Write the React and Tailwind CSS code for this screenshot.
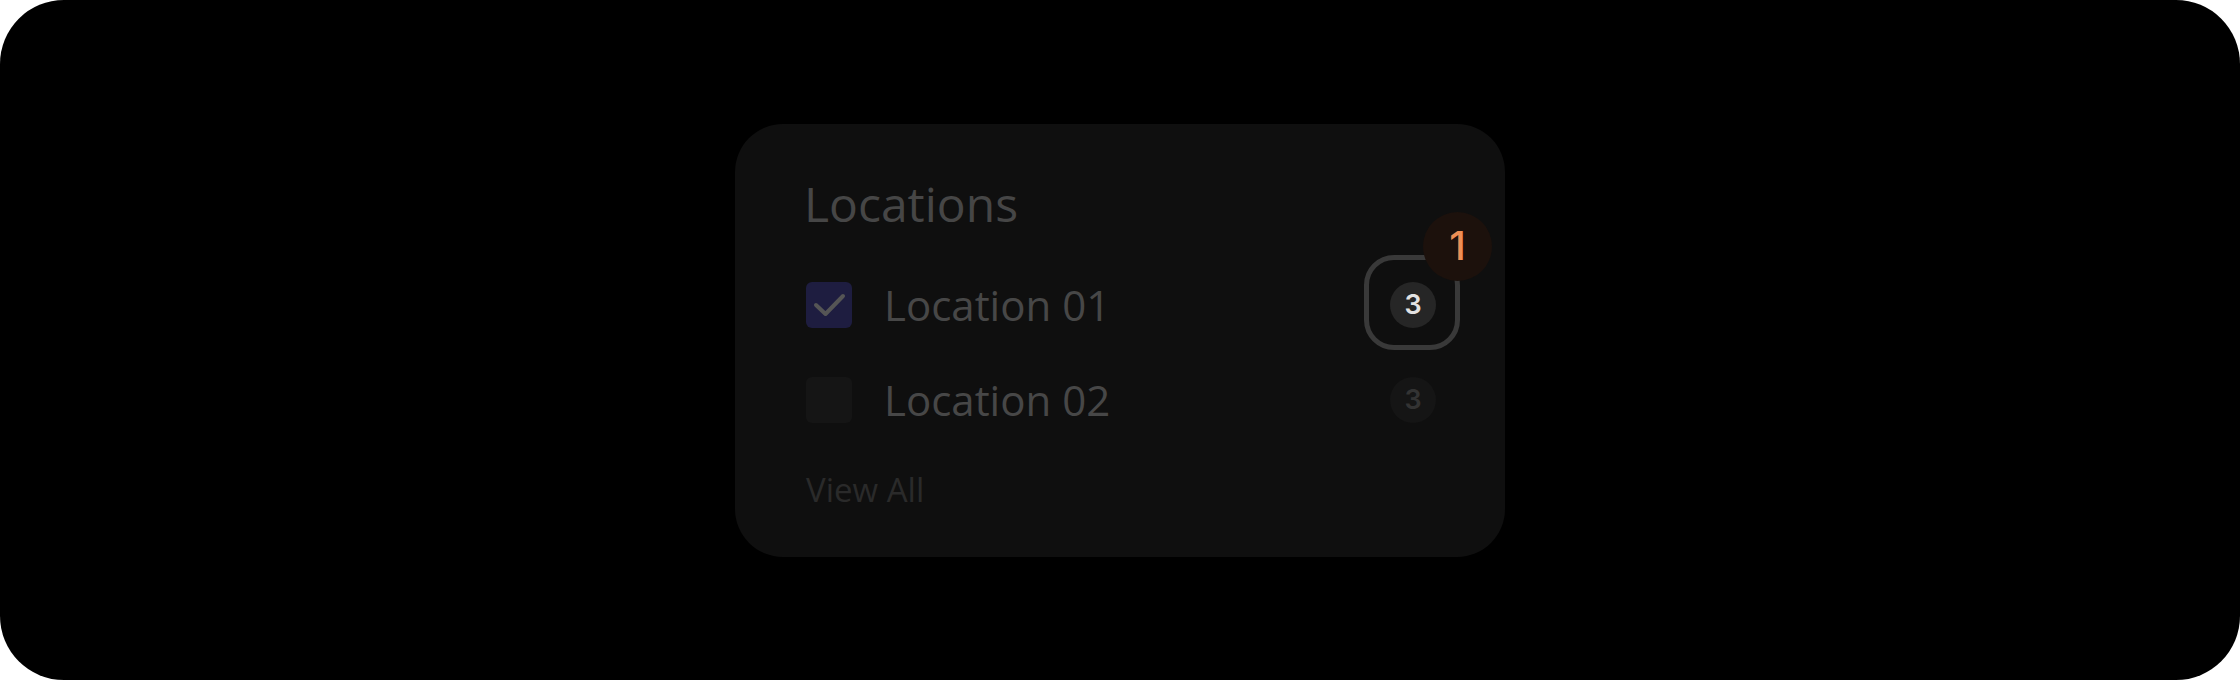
export default function App() {
  const font = { fontFamily: '"Open Sans", "Liberation Sans", sans-serif' };
  const num = { fontFamily: 'Inter, "Open Sans", sans-serif' };
  return (
    <div className="w-[2240px] h-[680px] bg-white" style={font}>
      <div className="w-full h-full bg-black rounded-[64px] flex items-center justify-center">
        <div className="relative w-[770px] h-[433px] bg-[#0f0f0f] rounded-[48px] flex flex-col pt-[56px] pl-[71px] pr-[69px]">
          <div className="h-[47px] text-[48px] leading-none font-medium text-[#464646] -ml-[2px]">Locations</div>

          <div className="mt-[55px] h-[46px] flex items-center">
            <div className="w-[46px] h-[46px] rounded-[6px] bg-[#1e1d40] flex items-center justify-center">
              <svg width="46" height="46" viewBox="0 0 46 46" fill="none">
                <path d="M10 23 L19.5 32 L37 14" stroke="#555555" strokeWidth="4" strokeLinecap="round" strokeLinejoin="round" />
              </svg>
            </div>
            <div className="ml-[32px] text-[42px] leading-none font-medium text-[#474747]">Location 01</div>
            <div className="ml-auto w-[46px] h-[46px] rounded-full bg-[#262626] flex items-center justify-center text-[27px] leading-none font-semibold text-[#e2e2e2]" style={num}>3</div>
          </div>

          <div className="mt-[49px] h-[46px] flex items-center">
            <div className="w-[46px] h-[46px] rounded-[6px] bg-[#151515]" />
            <div className="ml-[32px] text-[42px] leading-none font-medium text-[#474747]">Location 02</div>
            <div className="ml-auto w-[46px] h-[46px] rounded-full bg-[#151515] flex items-center justify-center text-[27px] leading-none font-semibold text-[#333333]" style={num}>3</div>
          </div>

          <div className="mt-[50px] h-[33px] text-[33px] leading-none text-[#2a2a2a]">View All</div>

          <div className="absolute left-[629px] top-[131px] w-[96px] h-[95px] rounded-[30px] border-[5px] border-[#393939]" />
          <div className="absolute left-[688px] top-[88px] w-[69px] h-[69px] rounded-full bg-[#1c110c] flex items-center justify-center text-[40px] leading-none font-medium text-[#ee8f55]" style={num}>1</div>
        </div>
      </div>
    </div>
  );
}
